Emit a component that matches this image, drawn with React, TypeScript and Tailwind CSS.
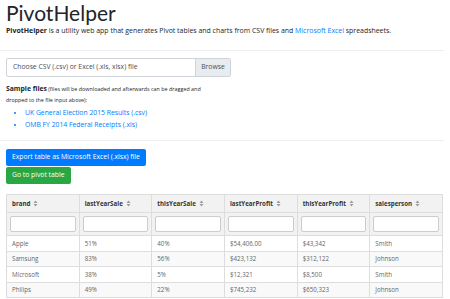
import React from "react";

const SortIcon = () => (
  <svg width="5" height="7" viewBox="0 0 5 7" className="inline-block ml-[3px] align-[-1px]">
    <path d="M0.5 3 L2.5 0.5 L4.5 3 Z" fill="#9a9a9a" />
    <path d="M0.5 4 L2.5 6.5 L4.5 4 Z" fill="#9a9a9a" />
  </svg>
);

const rows = [
  ["Apple", "51%", "40%", "$54,406.00", "$43,342", "Smith"],
  ["Samsung", "83%", "56%", "$423,132", "$312,122", "Johnson"],
  ["Microsoft", "38%", "5%", "$12,321", "$8,500", "Smith"],
  ["Philips", "49%", "22%", "$745,232", "$650,323", "Johnson"],
];

const headers = ["brand", "lastYearSale", "thisYearSale", "lastYearProfit", "thisYearProfit", "salesperson"];

export default function App() {
  return (
    <div className="w-[450px] h-[299px] overflow-hidden bg-white text-[#212529]" style={{ fontFamily: "'Open Sans', 'Noto Sans', sans-serif" }}>
      <div className="pl-[6px] pr-[6px]">
        <h1 className="text-[21px] leading-[24px] pt-[1px] font-normal" style={{ fontFamily: "Lato, 'Open Sans', sans-serif" }}>PivotHelper</h1>
        <p className="text-[6.95px] leading-[10px] mt-[1px]">
          <b>PivotHelper</b> is a utility web app that generates Pivot tables and charts from CSV files and{" "}
          <span className="text-[#007bff]">Microsoft Excel</span> spreadsheets.
        </p>
        <div className="h-px bg-[#eeeeee] mt-[14px] -ml-[6px]" />
        <div className="mt-[7px] w-[225px] h-[19px] border border-[#ced4da] rounded-[2px] flex items-stretch text-[6.8px] text-[#495057]">
          <div className="flex-1 flex items-center pl-[6px]">Choose CSV (.csv) or Excel (.xls, xlsx) file</div>
          <div className="w-[35px] bg-[#e9ecef] border-l border-[#ced4da] flex items-center justify-center">Browse</div>
        </div>
        <div className="mt-[6px] text-[5.4px] leading-[11px] w-[205px]">
          <b className="text-[6.8px] leading-[11px]">Sample files</b> (files will be downloaded and afterwards can be dragged and dropped to the file input above):
        </div>
        <ul className="text-[6.8px] leading-[12px] mt-[1px] pl-[19px] list-disc">
          <li className="text-[#007bff]">UK General Election 2015 Results (.csv)</li>
          <li className="text-[#007bff]">OMB FY 2014 Federal Receipts (.xls)</li>
        </ul>
        <div className="h-px bg-[#eeeeee] mt-[9px] -ml-[6px]" />
        <div className="mt-[8px] flex flex-col items-start">
          <div className="bg-[#007bff] text-white text-[6.8px] h-[17px] px-[6px] flex items-center rounded-[2px]">Export table as Microsoft Excel (.xlsx) file</div>
          <div className="bg-[#28a745] text-white text-[6.8px] h-[17px] px-[6px] flex items-center rounded-[2px] mt-[1px]">Go to pivot table</div>
        </div>
        <table className="mt-[10px] w-[437px] border-collapse table-fixed text-[6.2px]">
          <thead>
            <tr className="bg-[#f2f2f2] h-[18px]">
              {headers.map((h) => (
                <th key={h} className="border border-[#dddddd] text-left font-bold text-[#333] px-[5px]">
                  {h}
                  <SortIcon />
                </th>
              ))}
            </tr>
            <tr className="bg-[#f2f2f2] h-[23px]">
              {headers.map((h) => (
                <th key={h} className="border border-[#dddddd] px-[3px]">
                  <div className="h-[16px] bg-white border border-[#cccccc] rounded-[2px]" />
                </th>
              ))}
            </tr>
          </thead>
          <tbody>
            {rows.map((r, i) => (
              <tr key={i} className={`h-[15.5px] ${i % 2 === 1 ? "bg-[#f9f9f9]" : "bg-white"}`}>
                {r.map((c, j) => (
                  <td key={j} className="border border-[#dddddd] px-[5px] text-[#666]">{c}</td>
                ))}
              </tr>
            ))}
          </tbody>
        </table>
      </div>
    </div>
  );
}
